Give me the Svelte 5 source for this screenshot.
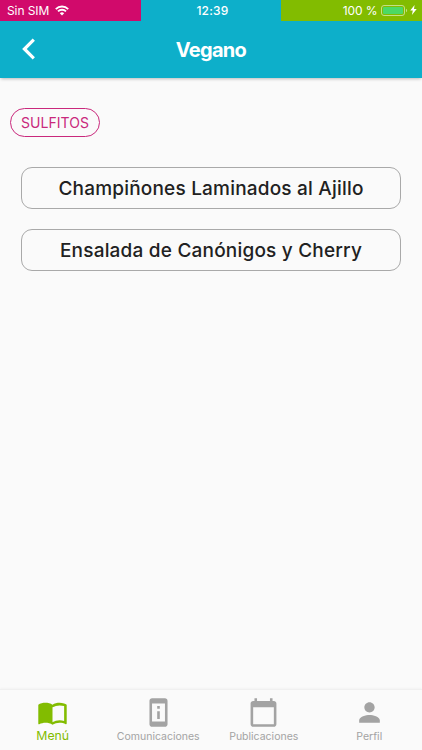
<script>
  let activeTab = 'Menú';

  const dishes = ['Champiñones Laminados al Ajillo', 'Ensalada de Canónigos y Cherry'];

  const tabs = [
    {
      label: 'Menú',
      icon: 'M21 5c-1.11-.35-2.33-.5-3.5-.5-1.95 0-4.05.4-5.5 1.5-1.45-1.1-3.55-1.5-5.5-1.5S2.45 4.9 1 6v14.65c0 .25.25.5.5.5.1 0 .15-.05.25-.05C3.1 20.45 5.05 20 6.5 20c1.95 0 4.05.4 5.5 1.5 1.35-.85 3.8-1.5 5.5-1.5 1.65 0 3.35.3 4.75 1.05.1.05.15.05.25.05.25 0 .5-.25.5-.5V6c-.6-.45-1.25-.75-2-1zm0 13.5c-1.1-.35-2.3-.5-3.5-.5-1.7 0-4.15.65-5.5 1.5V8c1.35-.85 3.8-1.5 5.5-1.5 1.2 0 2.4.15 3.5.5v11.5z'
    },
    {
      label: 'Comunicaciones',
      icon: 'M13 7h-2v2h2V7zm0 4h-2v6h2v-6zm4-9.99L7 1c-1.1 0-2 .9-2 2v18c0 1.1.9 2 2 2h10c1.1 0 2-.9 2-2V3c0-1.1-.9-1.99-2-1.99zM17 19H7V5h10v14z'
    },
    {
      label: 'Publicaciones',
      icon: 'M20 3h-1V1h-2v2H7V1H5v2H4c-1.1 0-2 .9-2 2v16c0 1.1.9 2 2 2h16c1.1 0 2-.9 2-2V5c0-1.1-.9-2-2-2zm0 18H4V8h16v13z'
    },
    {
      label: 'Perfil',
      icon: 'M12 12c2.21 0 4-1.79 4-4s-1.79-4-4-4-4 1.79-4 4 1.79 4 4 4zm0 2c-2.67 0-8 1.34-8 4v2h16v-2c0-2.66-5.33-4-8-4z'
    }
  ];
</script>

<div class="screen">
  <div class="status">
    <div class="carrier">
      <span>Sin SIM</span>
      <svg class="wifi" viewBox="0 0 14 11" width="14" height="11">
        <path d="M.8 4.1a8.8 8.8 0 0 1 12.4 0M3 6.4a5.7 5.7 0 0 1 8 0" />
        <path class="dot" d="M7 10.5 4.8 8.3a3.1 3.1 0 0 1 4.4 0z" />
      </svg>
    </div>
    <div class="clock">12:39</div>
    <div class="power">
      <span>100 %</span>
      <svg class="battery" viewBox="0 0 27 11" width="27" height="11">
        <rect class="case" x=".5" y=".5" width="23" height="10" rx="2.5" />
        <rect class="charge" x="2" y="2" width="20" height="7" rx="1.2" />
        <path class="cap" d="M25 3.8c1.5.5 1.5 2.9 0 3.4z" />
      </svg>
      <svg class="bolt" viewBox="0 0 7 10" width="7" height="10">
        <path d="M4.6 0 .2 5.6h2.6L1.9 10l4.8-5.9H4z" />
      </svg>
    </div>
  </div>

  <header>
    <button class="back" aria-label="Atrás">
      <svg viewBox="0 0 14 22" width="14" height="22"><path d="M11.8 1.6 2.4 11l9.4 9.4" /></svg>
    </button>
    <h1>Vegano</h1>
  </header>

  <main>
    <div class="chip">SULFITOS</div>
    <div class="dishes">
      {#each dishes as dish}
        <div class="dish">{dish}</div>
      {/each}
    </div>
  </main>

  <nav>
    {#each tabs as tab}
      <button class="tab" class:active={tab.label === activeTab} on:click={() => (activeTab = tab.label)}>
        <svg viewBox="0 0 24 24" width="31" height="31"><path d={tab.icon} /></svg>
        <span>{tab.label}</span>
      </button>
    {/each}
  </nav>
</div>

<style>
  :global(body) {
    margin: 0;
    overflow: hidden;
  }

  .screen {
    display: flex;
    flex-direction: column;
    width: 100%;
    height: 100vh;
    background: #fafafa;
    font-family: Inter, sans-serif;
    color: #212121;
  }

  button {
    padding: 0;
    border: none;
    background: none;
    font-family: inherit;
    cursor: pointer;
  }

  .status {
    display: grid;
    grid-template-columns: 141px 140px 1fr;
    height: 21px;
    background: #0dafca;
    color: #fff;
    font-size: 12px;
    line-height: 22px;
    white-space: nowrap;
  }

  .status > div {
    display: flex;
    align-items: center;
    height: 20.5px;
  }

  .status span {
    padding-top: 1px;
    letter-spacing: -0.1px;
  }

  .carrier {
    padding-left: 7px;
    gap: 6px;
    background: #d10a6b;
  }

  .clock {
    justify-content: center;
    padding-top: 1px;
    padding-left: 3px;
    font-weight: 500;
    letter-spacing: 0.2px;
  }

  .power {
    justify-content: flex-end;
    padding-right: 5px;
    background: #82bc00;
  }

  .wifi path {
    fill: none;
    stroke: #fff;
    stroke-width: 1.9;
  }

  .wifi .dot {
    fill: #fff;
    stroke: none;
  }

  .battery {
    margin-left: 3.5px;
  }

  .case {
    fill: none;
    stroke: #c4df86;
  }

  .charge {
    fill: #4cd964;
  }

  .cap {
    fill: #c4df86;
  }

  .bolt {
    margin-left: 2px;
    fill: #fff;
  }

  header {
    display: grid;
    grid-template-columns: 58px 1fr 58px;
    align-items: center;
    height: 57px;
    background: #0dafca;
    box-shadow: 0 2px 3px -1px rgba(0, 0, 0, 0.25);
    color: #fff;
  }

  .back {
    display: flex;
    padding: 0 0 1px 22px;
  }

  .back path {
    fill: none;
    stroke: #fff;
    stroke-width: 3.2;
  }

  h1 {
    margin: 0;
    font-size: 20px;
    font-weight: 700;
    line-height: 24px;
    letter-spacing: -0.7px;
    text-align: center;
  }

  main {
    flex: 1;
    padding: 30px 10px 0;
  }

  .chip {
    display: flex;
    align-items: center;
    justify-content: center;
    box-sizing: border-box;
    width: 90px;
    height: 29px;
    border: 1px solid #c9287c;
    border-radius: 15px;
    color: #c9287c;
    font-size: 14px;
    letter-spacing: 0.05px;
  }

  .dishes {
    display: flex;
    flex-direction: column;
    gap: 20px;
    padding: 30px 11px 0;
  }

  .dish {
    display: flex;
    align-items: center;
    justify-content: center;
    box-sizing: border-box;
    height: 42px;
    border: 1px solid #a9a9a9;
    border-radius: 11px;
    font-size: 19px;
    font-weight: 500;
    letter-spacing: 0.2px;
    white-space: nowrap;
  }

  nav {
    display: grid;
    grid-template-columns: repeat(4, 1fr);
    height: 60px;
    border-top: 1px solid #f0f0f0;
    box-shadow: 0 -1px 2px rgba(0, 0, 0, 0.03);
  }

  .tab {
    display: flex;
    flex-direction: column;
    align-items: center;
    padding-top: 7px;
    color: #a3a3a3;
    font-size: 10.5px;
    letter-spacing: 0;
  }

  .tab svg {
    fill: currentColor;
  }

  .tab span {
    margin-top: 2px;
    line-height: 14px;
  }

  .tab.active {
    color: #82bc00;
    font-size: 12.3px;
  }

  .tab.active span {
    margin-top: 0.5px;
  }
</style>
